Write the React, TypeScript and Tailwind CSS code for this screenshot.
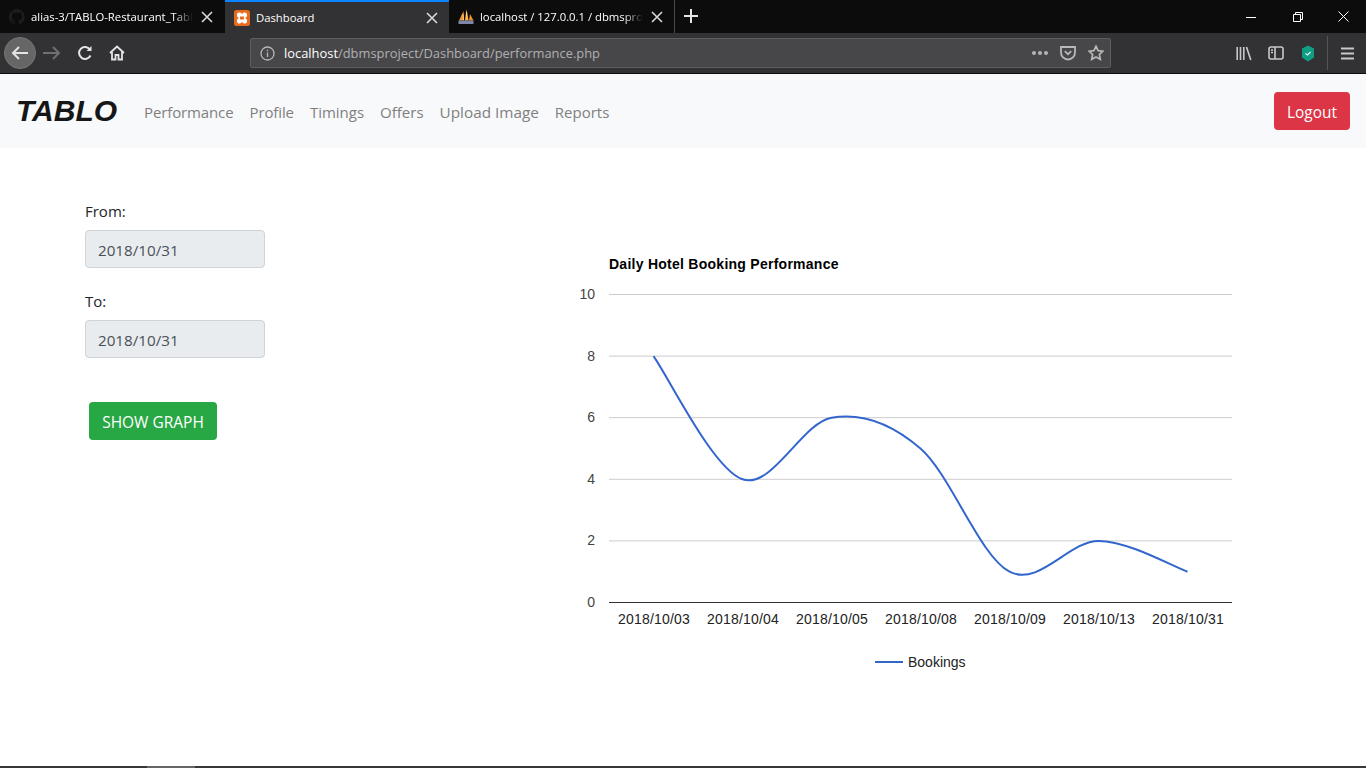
import React from 'react';

const points = [8, 4, 6, 5, 1, 2, 1];
const dates = ['2018/10/03', '2018/10/04', '2018/10/05', '2018/10/08', '2018/10/09', '2018/10/13', '2018/10/31'];
const ticks = [10, 8, 6, 4, 2, 0];

const px = (i: number) => 653.5 + i * 89;
const py = (v: number) => 602.5 - v * 30.8;

// smoothed line like the google chart one
function buildPath() {
  const k = 1 / 6;
  let d = `M ${px(0)} ${py(points[0])}`;
  for (let i = 0; i < points.length - 1; i++) {
    const prev = Math.max(i - 1, 0);
    const next = Math.min(i + 2, points.length - 1);
    const c1x = px(i) + (px(i + 1) - px(prev)) * k;
    const c1y = py(points[i]) + (py(points[i + 1]) - py(points[prev])) * k;
    const c2x = px(i + 1) - (px(next) - px(i)) * k;
    const c2y = py(points[i + 1]) - (py(points[next]) - py(points[i])) * k;
    d += ` C ${c1x} ${c1y} ${c2x} ${c2y} ${px(i + 1)} ${py(points[i + 1])}`;
  }
  return d;
}

function CloseIcon({ color = '#d8d8d8' }: { color?: string }) {
  return (
    <svg width="12" height="12" viewBox="0 0 12 12" fill="none" stroke={color} strokeWidth="1.6">
      <path d="M1 1l10 10M11 1L1 11" />
    </svg>
  );
}

function Tab({ title, active, children, wide, closeGap }: { title: string; active?: boolean; children: React.ReactNode; wide: string; closeGap: string }) {
  return (
    <div className={`${wide} h-full flex items-center relative ${active ? 'bg-[#323234] border-t-2 border-[#0a84ff]' : ''}`}>
      <div className="w-4 h-4 ml-[9px] mr-[6px] shrink-0">{children}</div>
      <div
        className={`flex-1 overflow-hidden whitespace-nowrap pt-[1px] text-[11.3px] text-white ${active ? '' : 'mr-[2px]'}`}
        style={active ? undefined : { maskImage: 'linear-gradient(to right, black 88%, transparent)' }}
      >
        {title}
      </div>
      <div className={`w-3 ml-[6px] shrink-0 flex ${closeGap}`}>
        <CloseIcon />
      </div>
    </div>
  );
}

function BrowserChrome() {
  return (
    <div className="h-[74px] shrink-0 flex flex-col bg-[#0c0c0c] border-b border-[#0c0c0c] font-['Open_Sans',sans-serif]">
      <div className="h-[33px] flex items-stretch">
        <Tab title="alias-3/TABLO-Restaurant_Table-Booking" wide="w-[225px]" closeGap="mr-[12px]">
          <svg viewBox="0 0 16 16" width="16" height="16" fill="#1d1d1d">
            <path d="M8 0a8 8 0 0 0-2.5 15.6c.4.1.5-.2.5-.4v-1.4c-2.2.5-2.7-1-2.7-1-.4-.9-.9-1.2-.9-1.2-.7-.5 0-.5 0-.5.8.1 1.2.8 1.2.8.7 1.2 1.9.9 2.3.7.1-.5.3-.9.5-1.1-1.8-.2-3.6-.9-3.6-4 0-.9.3-1.6.8-2.1-.1-.2-.4-1 .1-2.1 0 0 .7-.2 2.2.8a7.500 7.500 0 0 1 4 0c1.500-1 2.200-.8 2.200-.8.400 1.100.200 1.900.100 2.100.500.600.800 1.300.800 2.100 0 3.100-1.900 3.700-3.700 3.900.300.300.600.800.600 1.500v2.200c0 .200.100.500.600.400A8 8 0 0 0 8 0z" />
          </svg>
        </Tab>
        <Tab title="Dashboard" active wide="w-[224px]" closeGap="mr-[11px]">
          <svg viewBox="0 0 16 16" width="16" height="16">
            <rect width="16" height="16" rx="2.500" fill="#ea6a1c" />
            <path d="M3 5.500a2.500 2.500 0 0 1 5-1 2.500 2.500 0 0 1 5 1c0 1.200-.8 2-2 2.500 1.200.5 2 1.300 2 2.500a2.500 2.500 0 0 1-5 1 2.500 2.500 0 0 1-5-1c0-1.200.8-2 2-2.500-1.200-.5-2-1.300-2-2.500z" fill="#fff" />
            <rect x="6" y="6.500" width="4" height="3" fill="#ea6a1c" />
          </svg>
        </Tab>
        <Tab title="localhost / 127.0.0.1 / dbmsproject" wide="w-[226px] border-r border-[#4a4a4a]" closeGap="mr-[11px]">
          <svg viewBox="0 0 16 16" width="16" height="16">
            <path d="M1 11.500L5.500 2l.5 9.500zM6.800 11.500L8.500 0l2.200 11.500zM11 11.500L12 5l3.500 6.500z" fill="#f29423" />
            <path d="M5 5l.5 6M8.500 3l.5 8" stroke="#ffe9b8" strokeWidth="0.800" />
            <rect x="0.500" y="11.500" width="15" height="3.500" fill="#7c86a8" />
          </svg>
        </Tab>
        <div className="w-[31px] flex items-center justify-center pb-[1px]">
          <svg width="14" height="14" viewBox="0 0 14 14" stroke="#e6e6e6" strokeWidth="2">
            <path d="M7 0v14M0 7h14" />
          </svg>
        </div>
        <div className="flex-1 flex justify-end">
          <div className="w-[46px] flex items-center justify-center pr-[2px]">
            <svg width="10" height="10" viewBox="0 0 10 10" stroke="#fff"><path d="M0 5.500h10" /></svg>
          </div>
          <div className="w-[45px] flex items-center justify-center">
            <svg width="10" height="10" viewBox="0 0 10 10" fill="none" stroke="#fff">
              <path d="M.5 2.500h7v7h-7zM2.500 2.500v-2h7v7h-2" />
            </svg>
          </div>
          <div className="w-[46px] flex items-center justify-center">
            <svg width="11" height="11" viewBox="0 0 11 11" stroke="#fff"><path d="M.5.5l10 10M10.500.5l-10 10" /></svg>
          </div>
        </div>
      </div>

      <div className="h-[40px] bg-[#323234] flex items-center">
        <div className="w-[250px] h-full flex items-center shrink-0">
          <div className="ml-[4px] w-8 h-8 rounded-full bg-[#666667] border border-[#767677] flex items-center justify-center">
            <svg width="18" height="16" viewBox="0 0 18 16" fill="none" stroke="#e4e4e4" strokeWidth="2">
              <path d="M17 8H2M8 2L2 8l6 6" />
            </svg>
          </div>
          <div className="ml-[7px] w-[18px] flex">
            <svg width="18" height="16" viewBox="0 0 18 16" fill="none" stroke="#6f6f70" strokeWidth="2">
              <path d="M0 8h15M10 2l6 6-6 6" />
            </svg>
          </div>
          <div className="ml-[16px] w-4 flex">
            <svg width="16" height="16" viewBox="0 0 16 16" fill="none" stroke="#e4e4e4" strokeWidth="2">
              <path d="M13.500 10.500A6 6 0 1 1 13 4.500" />
              <path d="M14.500 1v5h-5z" fill="#e4e4e4" stroke="none" />
            </svg>
          </div>
          <div className="ml-[16px] w-4 flex">
            <svg width="16" height="16" viewBox="0 0 16 16" fill="none" stroke="#e4e4e4" strokeWidth="1.800">
              <path d="M1 8l7-6.500L15 8M3 7v7.500h3.500V10h3v4.500H13V7" />
            </svg>
          </div>
        </div>

        <div className="w-[861px] h-[30px] bg-[#474749] border border-[#5e5e60] rounded-[2px] flex items-center">
          <div className="ml-[9px] w-4 flex">
            <svg width="15" height="15" viewBox="0 0 15 15" fill="none" stroke="#b8b8b8" strokeWidth="1.300">
              <circle cx="7.500" cy="7.500" r="6.500" />
              <path d="M7.500 6.500v4.500M7.500 3.800v1.400" />
            </svg>
          </div>
          <div className="ml-[8px] pt-[2px] flex-1 text-[12.9px] whitespace-nowrap text-[#b0b0b1]">
            <span className="text-white">localhost</span>/dbmsproject/Dashboard/performance.php
          </div>
          <div className="flex items-center gap-[2px] mr-[12px]">
            <span className="w-1 h-1 rounded-full bg-[#b4b4b4]" />
            <span className="w-1 h-1 rounded-full bg-[#b4b4b4]" />
            <span className="w-1 h-1 rounded-full bg-[#b4b4b4]" />
          </div>
          <div className="mr-[12px] flex">
            <svg width="16" height="16" viewBox="0 0 16 16" fill="none" stroke="#b8b8b8" strokeWidth="1.800">
              <path d="M1 2h14v5.500a7 7 0 0 1-14 0z" />
              <path d="M4.800 6.200L8 9.200l3.200-3" />
            </svg>
          </div>
          <div className="mr-[6px] flex">
            <svg width="16" height="16" viewBox="0 0 16 16" fill="none" stroke="#b8b8b8" strokeWidth="1.700">
              <path d="M8 1.200l2.100 4.400 4.800.600-3.500 3.300.900 4.800L8 12l-4.300 2.300.900-4.800L1.100 6.200l4.800-.600z" />
            </svg>
          </div>
        </div>

        <div className="flex-1 flex items-center">
          <div className="ml-[125px] flex">
            <svg width="16" height="16" viewBox="0 0 16 16" fill="none" stroke="#c8c8c8" strokeWidth="1.600">
              <path d="M1.200 2v13M4.500 2v13M7.800 2v13M10.500 2l4.300 13" />
            </svg>
          </div>
          <div className="ml-[16px] flex">
            <svg width="16" height="16" viewBox="0 0 16 16" fill="none" stroke="#c8c8c8" strokeWidth="1.600">
              <rect x="1" y="2" width="14" height="12" rx="2" />
              <path d="M7 2v12M3 5h2M3 7.500h2" />
            </svg>
          </div>
          <div className="ml-[17px] flex">
            <svg width="14" height="17" viewBox="0 0 14 17">
              <path d="M7 .5l6 3v9l-6 4-6-4v-9z" fill="#0f9d84" />
              <path d="M4.500 8.500l2 1.500 3-3" fill="none" stroke="#e8f5f2" strokeWidth="1.200" />
            </svg>
          </div>
          <div className="ml-[12px] w-px h-[34px] bg-[#555557]" />
          <div className="ml-[13px] flex">
            <svg width="13" height="13" viewBox="0 0 13 13" stroke="#c8c8c8" strokeWidth="2">
              <path d="M0 1.500h13M0 6.500h13M0 11.500h13" />
            </svg>
          </div>
        </div>
      </div>
    </div>
  );
}

function Navbar() {
  return (
    <nav className="h-[74px] shrink-0 bg-[#f8f9fa] flex items-center pl-4 pr-4 font-['Open_Sans',sans-serif]">
      <div className="w-[128px] shrink-0 text-[30px] font-bold italic tracking-[0px] text-[#161616] font-['Liberation_Sans',sans-serif] leading-none">TABLO</div>
      <div className="flex-1 flex items-baseline gap-4 pt-[2px] text-[15px] text-[#7f7f7f]">
        <span className="tracking-[-0.12px]">Performance</span>
        <span className="tracking-[-0.12px]">Profile</span>
        <span>Timings</span>
        <span>Offers</span>
        <span className="text-[15.3px]">Upload Image</span>
        <span>Reports</span>
      </div>
      <button className="w-[76px] h-[38px] pt-[4px] bg-[#dc3545] rounded-[4px] text-white text-[15.4px]">Logout</button>
    </nav>
  );
}

function DateField({ label, value }: { label: string; value: string }) {
  return (
    <div className="mb-[22px]">
      <div className="text-[15px] leading-[22px] pb-[2px] text-[#212529] mb-[6px]">{label}</div>
      <div className="w-[180px] h-[38px] pt-[2px] bg-[#e9ecef] border border-[#ced4da] rounded-[4px] pl-3 flex items-center text-[15.2px] text-[#495057]">
        {value}
      </div>
    </div>
  );
}

function Chart() {
  return (
    <svg width="700" height="460" viewBox="560 230 700 460" className="block font-['Liberation_Sans',sans-serif]">
      <text x="609" y="269" fontSize="14" fontWeight="bold" fill="#000" letterSpacing="0.26">Daily Hotel Booking Performance</text>
      {ticks.map((t) => (
        <g key={t}>
          <line x1="609" x2="1232" y1={py(t)} y2={py(t)} stroke={t === 0 ? '#333' : '#ccc'} />
          <text x="595" y={py(t) + 4.500} fontSize="14" fill="#444" textAnchor="end">{t}</text>
        </g>
      ))}
      <path d={buildPath()} fill="none" stroke="#3366cc" strokeWidth="2" />
      {dates.map((d, i) => (
        <text key={d} x={px(i) + 0.5} y="624" fontSize="14" fill="#222" textAnchor="middle" letterSpacing="0.2">{d}</text>
      ))}
      <line x1="875" x2="903" y1="662" y2="662" stroke="#3366cc" strokeWidth="2" />
      <text x="908" y="667" fontSize="14" fill="#222">Bookings</text>
    </svg>
  );
}

export default function App() {
  return (
    <div className="w-[1366px] h-[768px] overflow-hidden flex flex-col bg-white">
      <BrowserChrome />
      <Navbar />
      <main className="flex-1 flex font-['Open_Sans',sans-serif]">
        <div className="w-[560px] shrink-0 pl-[85px] pt-[52px]">
          <DateField label="From:" value="2018/10/31" />
          <DateField label="To:" value="2018/10/31" />
          <button className="ml-[4px] mt-[22px] w-[128px] h-[38px] pt-[3px] bg-[#28a745] rounded-[4px] text-white text-[15.5px]">SHOW GRAPH</button>
        </div>
        <div className="pt-[82px]">
          <Chart />
        </div>
      </main>
      <div className="h-[2px] shrink-0 bg-[#38383a] flex">
        <div className="ml-[147px] w-[48px] bg-[#666]" />
      </div>
    </div>
  );
}
